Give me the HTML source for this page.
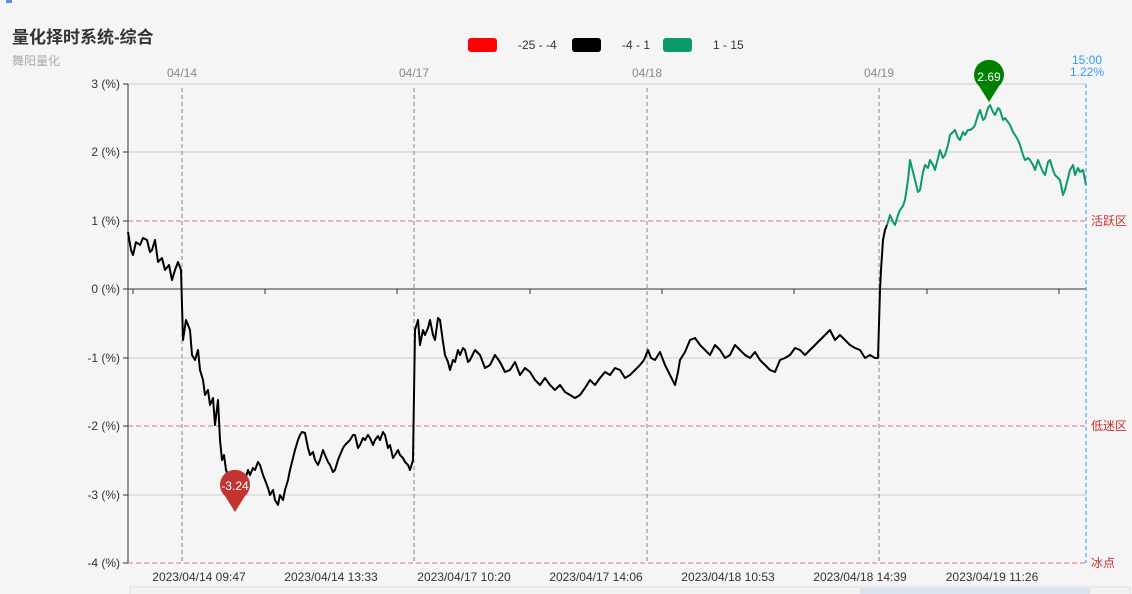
<!DOCTYPE html>
<html><head><meta charset="utf-8"><style>
body{margin:0;background:#f5f5f5;font-family:"Liberation Sans","Noto Sans CJK SC",sans-serif;}
svg{display:block}
</style></head><body>
<svg width="1132" height="594" xmlns="http://www.w3.org/2000/svg" font-family="Liberation Sans, Noto Sans CJK SC, sans-serif">
<rect width="1132" height="594" fill="#f5f5f5"/>
<rect x="6" y="0" width="6" height="3" fill="#5b8ee6"/>
<text x="12" y="43" font-size="17" font-weight="bold" fill="#333">量化择时系统-综合</text>
<text x="12" y="65" font-size="12" fill="#aaa">舞阳量化</text>
<!-- legend -->
<rect x="468" y="38" width="29" height="14" rx="3" fill="#f00"/>
<text x="518" y="49" font-size="12" fill="#333">-25 - -4</text>
<rect x="572" y="38" width="29" height="14" rx="3" fill="#000"/>
<text x="622" y="49" font-size="12" fill="#333">-4 - 1</text>
<rect x="663" y="38" width="29" height="14" rx="3" fill="#0b9a68"/>
<text x="713" y="49" font-size="12" fill="#333">1 - 15</text>
<!-- grid -->
<g stroke="#ccc" stroke-width="1">
<line x1="128" y1="84" x2="1086" y2="84"/><line x1="128" y1="152" x2="1086" y2="152"/>
<line x1="128" y1="358" x2="1086" y2="358"/><line x1="128" y1="495" x2="1086" y2="495"/>
</g>
<g stroke="#d9534f" stroke-dasharray="5,3" stroke-width="1" opacity="0.8">
<line x1="128" y1="221" x2="1086" y2="221"/><line x1="128" y1="426" x2="1086" y2="426"/><line x1="128" y1="563" x2="1086" y2="563"/>
</g>
<line x1="128" y1="289" x2="1086" y2="289" stroke="#333"/>
<g stroke="#888" stroke-dasharray="4,3">
<line x1="182" y1="88" x2="182" y2="563"/><line x1="414" y1="88" x2="414" y2="563"/>
<line x1="647" y1="88" x2="647" y2="563"/><line x1="879" y1="88" x2="879" y2="563"/>
</g>
<line x1="1086" y1="84" x2="1086" y2="563" stroke="#3399ff" stroke-dasharray="4,3"/>
<line x1="128" y1="84" x2="128" y2="563" stroke="#333"/>
<g stroke="#333"><line x1="123" y1="84" x2="128" y2="84"/><line x1="123" y1="152" x2="128" y2="152"/><line x1="123" y1="221" x2="128" y2="221"/><line x1="123" y1="289" x2="128" y2="289"/><line x1="123" y1="358" x2="128" y2="358"/><line x1="123" y1="426" x2="128" y2="426"/><line x1="123" y1="495" x2="128" y2="495"/><line x1="123" y1="563" x2="128" y2="563"/>
<line x1="133" y1="289" x2="133" y2="294"/><line x1="265" y1="289" x2="265" y2="294"/><line x1="397" y1="289" x2="397" y2="294"/><line x1="530" y1="289" x2="530" y2="294"/><line x1="662" y1="289" x2="662" y2="294"/><line x1="794" y1="289" x2="794" y2="294"/><line x1="927" y1="289" x2="927" y2="294"/><line x1="1059" y1="289" x2="1059" y2="294"/></g>
<g font-size="12" fill="#333" text-anchor="end">
<text x="120" y="88">3 (%)</text><text x="120" y="156">2 (%)</text><text x="120" y="225">1 (%)</text><text x="120" y="293">0 (%)</text><text x="120" y="362">-1 (%)</text><text x="120" y="430">-2 (%)</text><text x="120" y="499">-3 (%)</text><text x="120" y="567">-4 (%)</text>
</g>
<g font-size="12" fill="#888" text-anchor="middle">
<text x="182" y="77">04/14</text><text x="414" y="77">04/17</text><text x="647" y="77">04/18</text><text x="879" y="77">04/19</text>
</g>
<text x="1087" y="64" font-size="12" fill="#3399ff" text-anchor="middle">15:00</text>
<text x="1087" y="76" font-size="12" fill="#3399ff" text-anchor="middle">1.22%</text>
<g font-size="12" fill="#c9302c"><text x="1091" y="225">活跃区</text><text x="1091" y="430">低迷区</text><text x="1091" y="567">冰点</text></g>
<g font-size="12" fill="#333" text-anchor="middle">
<text x="199" y="581">2023/04/14 09:47</text><text x="331" y="581">2023/04/14 13:33</text><text x="464" y="581">2023/04/17 10:20</text><text x="596" y="581">2023/04/17 14:06</text><text x="728" y="581">2023/04/18 10:53</text><text x="860" y="581">2023/04/18 14:39</text><text x="992" y="581">2023/04/19 11:26</text>
</g>
<rect x="130" y="587" width="1000" height="10" fill="#f3f3f3" stroke="#ddd"/>
<rect x="860" y="588" width="230" height="8" fill="#dde3ee"/>
<polyline fill="none" stroke="#000" stroke-width="2" stroke-linejoin="round" points="128,232 131,250 133,255 136,242 140,245 143,238 147,240 150,252 152,250 155,240 158,262 162,258 165,270 169,265 172,280 175,270 178,262 181,270 183,340 186,320 190,330 192,355 195,360 198,350 200,370 203,380 205,395 208,390 210,405 213,398 215,425 218,400 220,440 222,460 224,455 226,470 228,475 230,490 232,500 235,510 237,495 240,490 243,485 245,480 248,470 250,475 253,468 255,470 258,462 260,465 263,475 265,480 268,488 270,495 273,490 275,500 278,505 280,495 283,500 285,490 288,480 290,470 293,458 295,450 298,440 300,435 302,432 305,433 308,448 310,455 313,452 315,460 318,465 320,460 323,450 325,455 328,462 330,465 333,472 335,470 338,460 340,455 343,448 345,445 348,442 350,440 353,435 355,435 358,448 360,445 363,438 365,440 368,435 370,438 373,445 375,440 378,436 380,440 383,432 385,435 388,448 390,445 393,458 395,455 398,450 400,455 403,458 405,462 408,465 410,470 413,460 415,330 418,320 420,345 423,330 425,335 428,328 430,320 433,335 435,340 438,318 440,320 443,342 445,355 448,362 450,370 453,360 455,362 458,350 460,355 463,348 465,350 468,362 470,360 475,350 480,355 485,368 490,365 495,355 500,362 505,372 510,370 515,362 520,375 525,368 530,372 535,380 540,385 545,378 550,385 555,390 560,385 565,392 570,395 575,398 580,395 585,388 590,380 595,385 600,378 605,372 610,375 615,368 620,370 625,378 630,375 635,370 640,365 644,360 648,350 651,358 655,360 660,352 665,365 670,375 675,385 678,372 680,360 685,352 690,340 695,338 700,345 705,350 710,355 715,345 720,350 725,358 730,355 735,345 740,350 745,355 750,358 755,352 760,360 765,365 770,370 775,372 780,360 785,358 790,355 795,348 800,350 805,355 810,350 815,345 820,340 825,335 830,330 835,340 840,335 845,340 850,345 855,348 860,350 865,358 870,355 875,358 878,358 880,290 881,270 883,240 885,230 887,225"/>
<polyline fill="none" stroke="#0b9a68" stroke-width="2" stroke-linejoin="round" points="887,225 890,215 893,222 895,225 898,215 900,210 903,206 905,200 908,180 910,160 913,172 915,180 918,192 920,190 923,172 925,165 928,168 930,160 933,165 935,170 938,158 940,150 943,158 945,155 948,145 950,135 953,132 955,130 958,138 960,140 963,132 965,135 968,130 970,130 973,128 975,125 978,115 980,110 983,120 985,118 988,108 990,105 993,112 995,115 998,108 1000,110 1003,120 1005,118 1008,122 1010,125 1013,132 1015,135 1018,140 1020,145 1023,155 1025,160 1028,158 1030,160 1033,165 1035,170 1038,160 1040,165 1043,172 1045,175 1048,162 1050,160 1053,170 1055,175 1058,178 1060,180 1063,195 1065,190 1068,178 1070,170 1073,165 1075,175 1078,168 1080,172 1083,170 1086,185"/>
<!-- pins -->
<path d="M235,512 L225,496 A15,15 0 1 1 245,496 Z" fill="#c23531"/>
<text x="235" y="490" font-size="12" fill="#fff" text-anchor="middle">-3.24</text>
<path d="M989,102 L979,86 A15,15 0 1 1 999,86 Z" fill="#008000"/>
<text x="989" y="81" font-size="12" fill="#fff" text-anchor="middle">2.69</text>
</svg>
</body></html>
